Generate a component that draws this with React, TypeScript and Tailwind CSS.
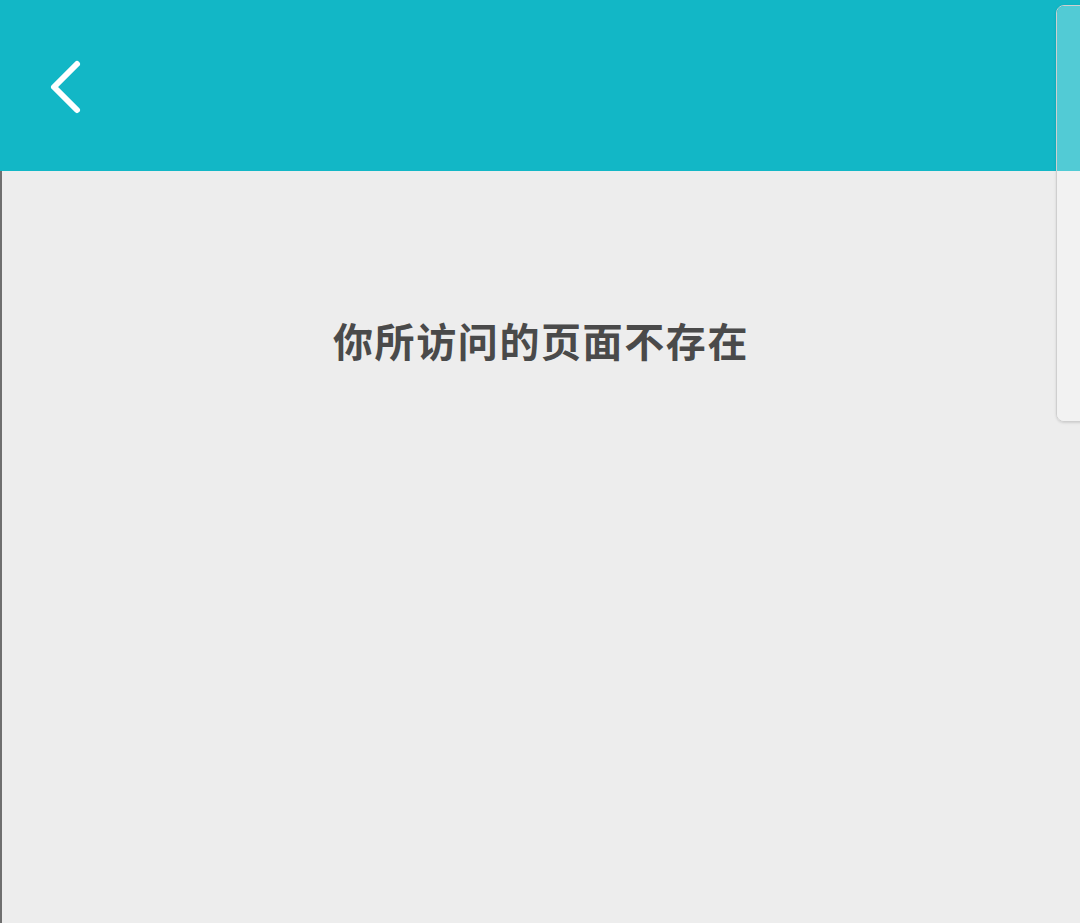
import { ChevronLeft } from "lucide-react";

export default function App() {
    return (
        <div
            className="relative h-[923px] w-[1080px] overflow-hidden bg-[#ededed]"
            style={{ fontFamily: '"Noto Sans CJK SC", "Noto Sans", sans-serif' }}
        >
            <header className="flex h-[171px] items-center bg-[#12b7c6] pl-[38px]">
                <button className="text-white">
                    <svg width="56" height="64" viewBox="0 0 56 64" fill="none">
                        <path d="M39 10 L16 33 L39 56" stroke="white" strokeWidth="6" strokeLinecap="round" strokeLinejoin="round" />
                    </svg>
                </button>
            </header>
            <main className="flex h-[752px] justify-center border-l-2 border-[#6f6f6f]">
                <h1 className="mt-[143px] text-[40px] font-bold leading-[52px] tracking-[1.6px] text-[#4a4a4a]">
                    你所访问的页面不存在
                </h1>
            </main>
            <div className="absolute left-[1056px] top-[5px] h-[417px] w-[60px] overflow-hidden rounded-lg border border-[#cfcfcf] shadow-sm">
                <div className="h-[165px] bg-[#52cbd5]" />
                <div className="h-full bg-[#f2f2f2]" />
            </div>
        </div>
    );
}
